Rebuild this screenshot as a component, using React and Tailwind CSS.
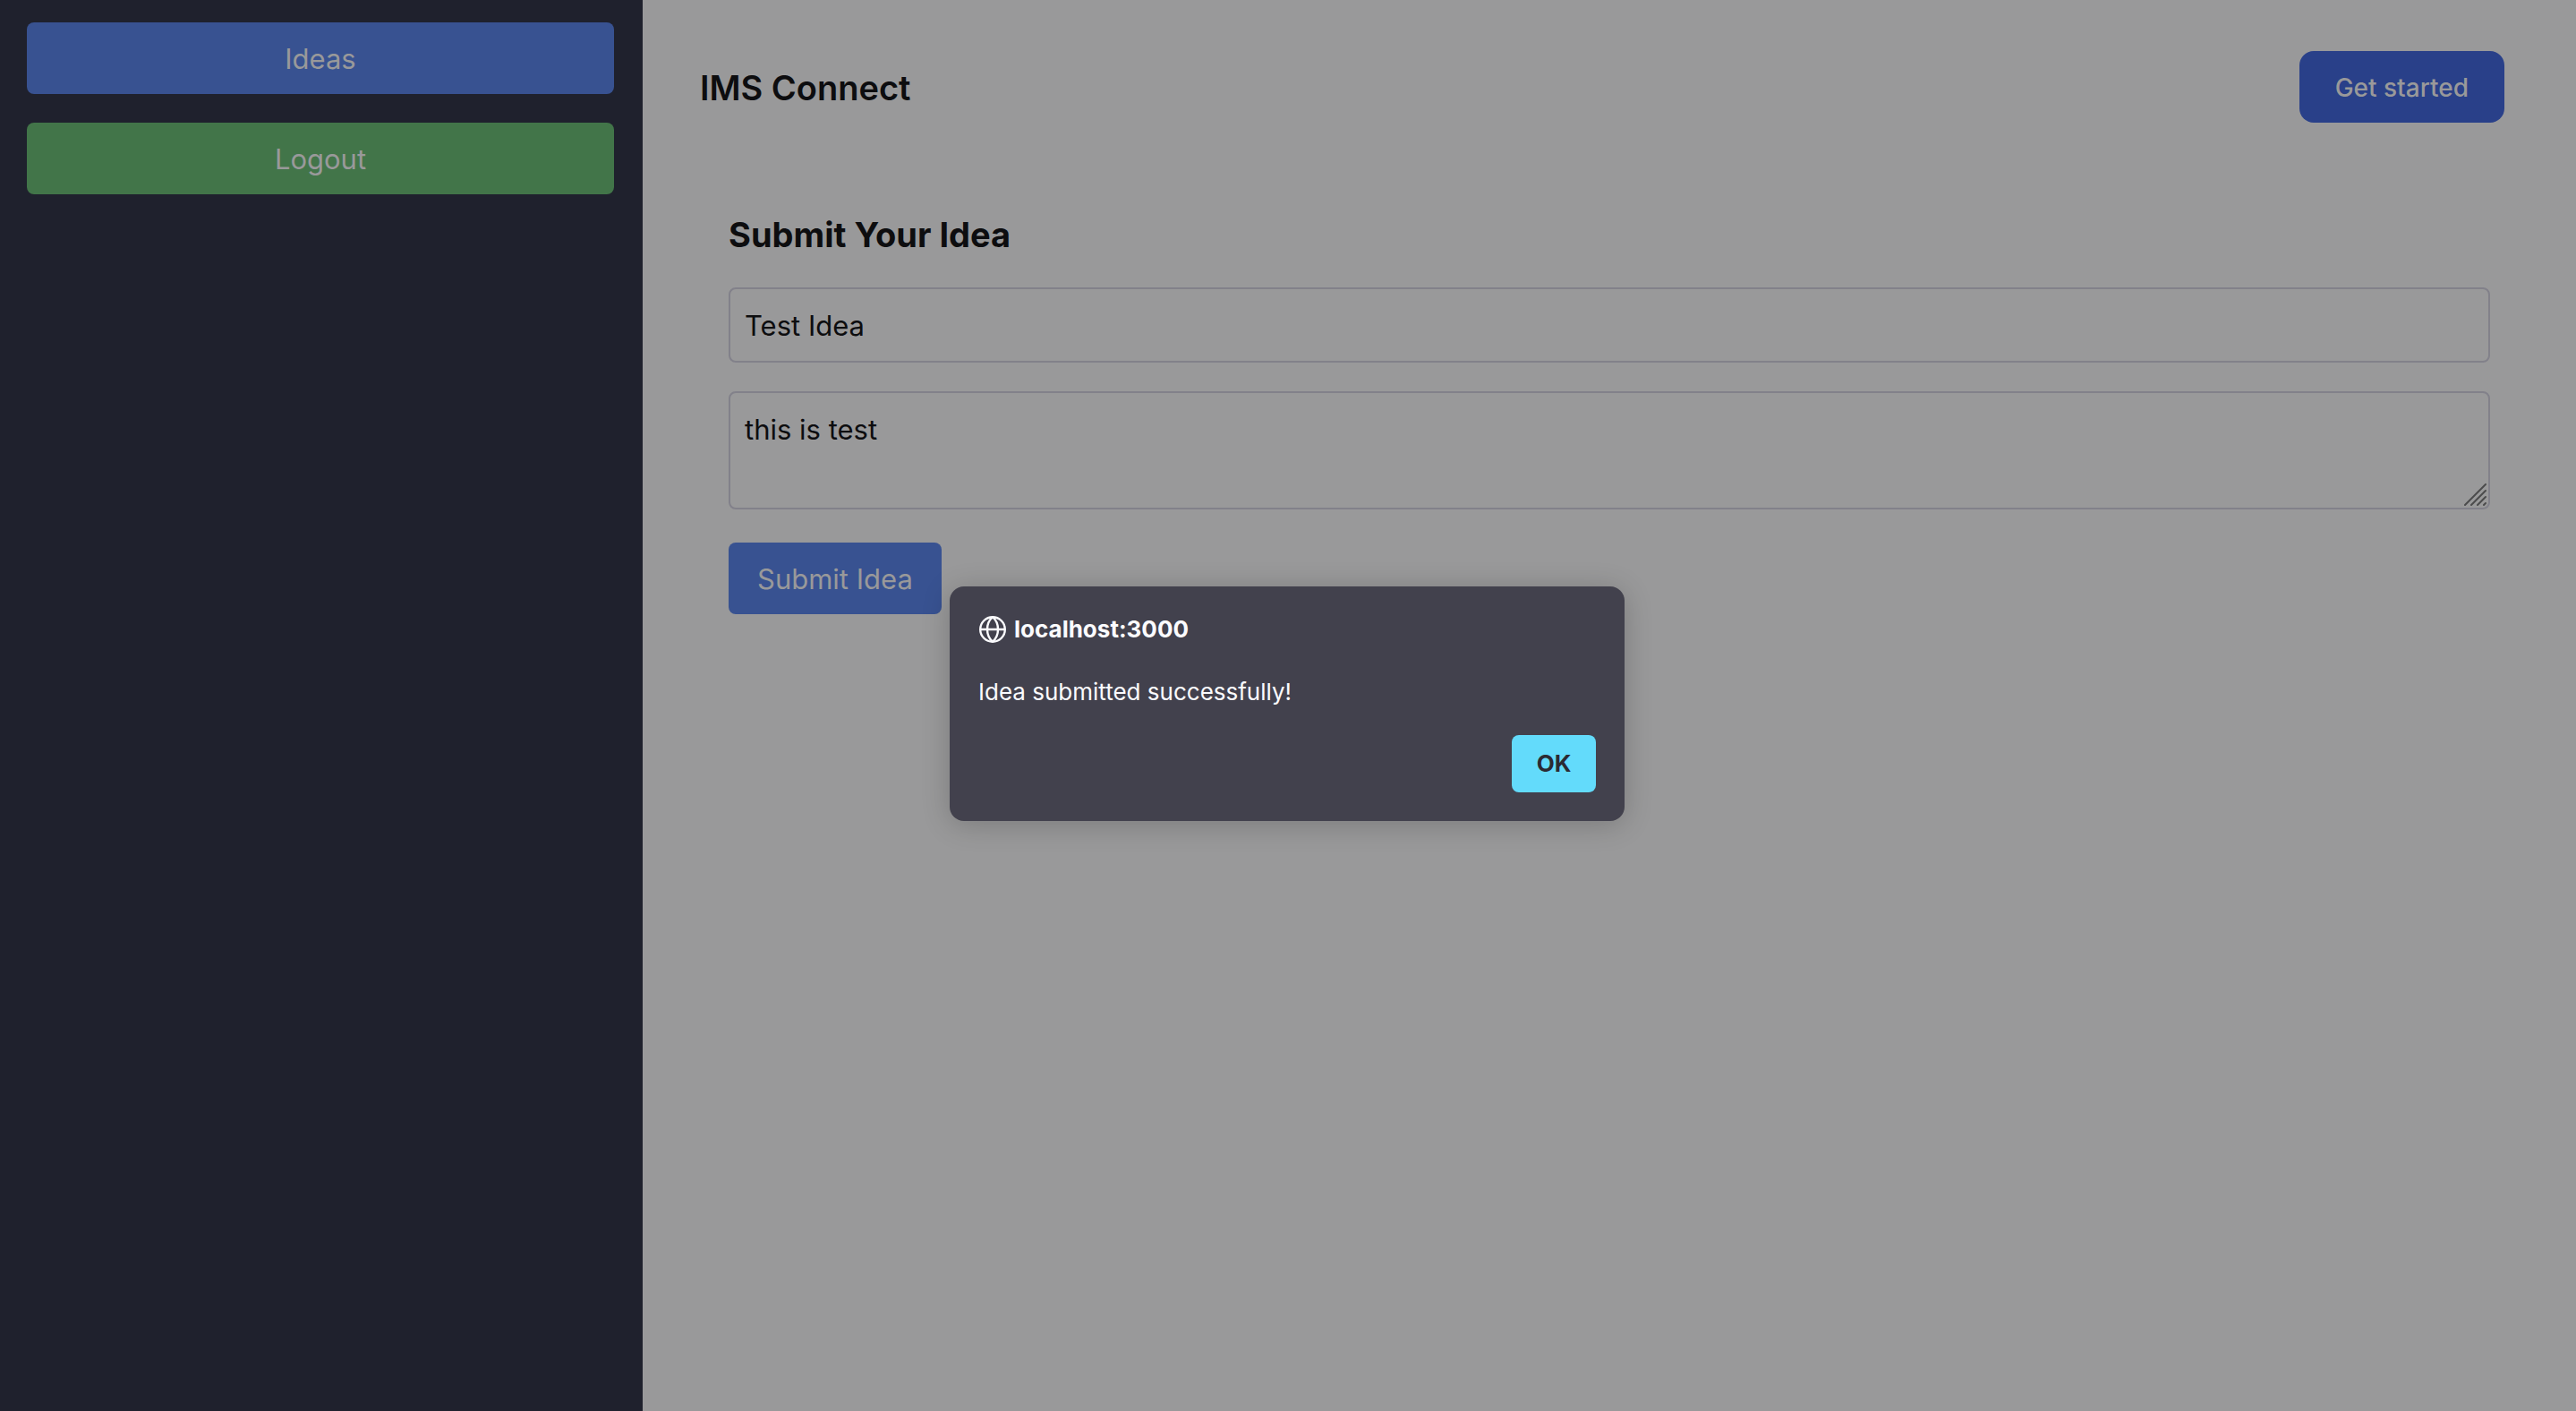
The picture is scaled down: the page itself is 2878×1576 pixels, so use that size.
import { useState } from "react";

function GlobeIcon() {
  return (
    <svg className="size-8 shrink-0" viewBox="0 0 32 32" fill="none" stroke="currentColor" strokeWidth="2.4" aria-hidden="true">
      <circle cx="16" cy="16" r="13.8" />
      <path d="M2 16h28M16 2.2c-8 7-8 20.6 0 27.6M16 2.2c8 7 8 20.6 0 27.6" />
    </svg>
  );
}

function Sidebar() {
  const item = "h-20 w-full rounded-lg pt-0.5 text-[31px] text-[#99999a]";
  return (
    <aside className="flex w-[718px] shrink-0 flex-col gap-8 bg-[#1f212d] pt-[25px] pr-8 pl-[30px]">
      <button className={item + " bg-[#385291]"}>Ideas</button>
      <button className={item + " bg-[#427549]"}>Logout</button>
    </aside>
  );
}

function Header() {
  return (
    <header className="flex items-center justify-between pr-20 pl-16">
      <h1 className="pt-0.5 text-[38px] font-semibold">IMS Connect</h1>
      <button className="h-20 rounded-2xl bg-[#294089] px-10 pt-0.5 text-[28px] font-medium text-[#99999a]">
        Get started
      </button>
    </header>
  );
}

function IdeaForm() {
  const [title, setTitle] = useState("Test Idea");
  const [details, setDetails] = useState("this is test");
  const field = "w-full rounded-lg border-2 border-[#82818a] bg-transparent px-4 text-[31px]";
  return (
    <form className="mt-[98px] flex flex-col items-start gap-8 px-24" onSubmit={(e) => e.preventDefault()}>
      <h2 className="text-[38px] leading-[54px] font-bold">Submit Your Idea</h2>
      <input aria-label="Idea title" className={field + " h-[84px]"} value={title} onChange={(e) => setTitle(e.target.value)} />
      <div className="relative w-full">
        <textarea
          aria-label="Idea details"
          className={field + " block h-[132px] resize-none pt-[17px] leading-12"}
          value={details}
          onChange={(e) => setDetails(e.target.value)}
        />
        <svg className="pointer-events-none absolute right-1 bottom-1 size-[25px]" viewBox="0 0 25 25" stroke="#4b4b4c" strokeWidth="2" strokeLinecap="round" aria-hidden="true">
          <path d="M1 24 24 1M8 24 24 8M15 24l9-9M22 24l2-2" />
        </svg>
      </div>
      <button className="mt-[5px] h-20 rounded-lg bg-[#385291] px-8 pt-0.5 text-[31px] text-[#99999a]">Submit Idea</button>
    </form>
  );
}

function AlertDialog() {
  return (
    <div className="absolute inset-0 flex items-center justify-center pr-0.5 pb-[5px]">
      <div
        role="alertdialog"
        aria-labelledby="alert-title"
        aria-describedby="alert-message"
        className="flex w-[754px] flex-col rounded-2xl bg-[#42414d] p-8 text-[26px] text-[#fbfbfe] shadow-[0_4px_32px_rgba(0,0,0,0.2)]"
      >
        <div className="flex items-center gap-2">
          <GlobeIcon />
          <h2 id="alert-title" className="leading-8 font-bold">localhost:3000</h2>
        </div>
        <p id="alert-message" className="mt-9 leading-9">Idea submitted successfully!</p>
        <button className="mt-[30px] h-16 w-[94px] self-end rounded-lg bg-[#63dbfb] font-bold text-[#2b2a33]">OK</button>
      </div>
    </div>
  );
}

export default function App() {
  return (
    <div className="relative flex min-h-screen bg-[#99999a] font-['Inter',sans-serif] text-[#0d0d0f]">
      <Sidebar />
      <main className="min-w-0 flex-1 pt-[57px]">
        <Header />
        <IdeaForm />
      </main>
      <AlertDialog />
    </div>
  );
}
